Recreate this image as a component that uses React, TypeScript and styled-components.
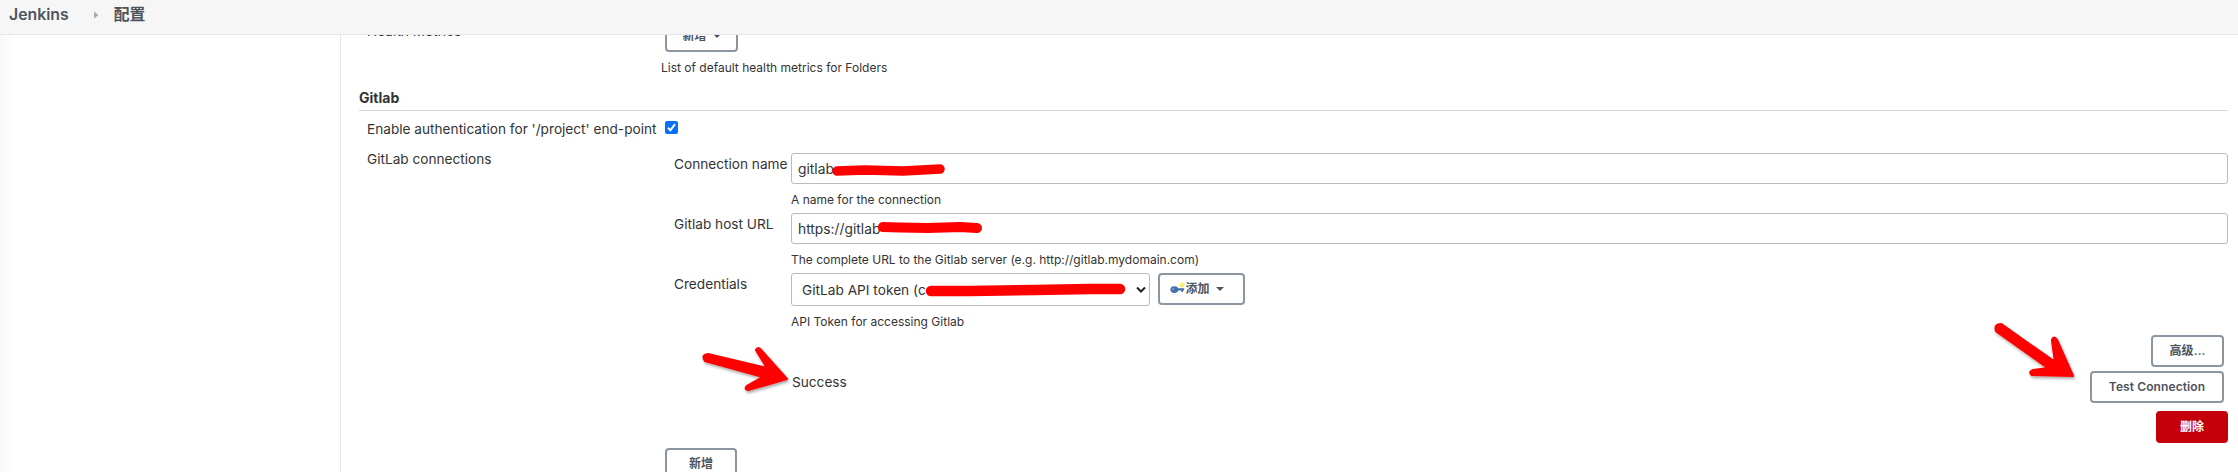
import React from "react";
import styled, { createGlobalStyle } from "styled-components";

const Global = createGlobalStyle`
  * { box-sizing: border-box; }
  html, body { margin: 0; background: #fff; }
  body {
    font-family: Inter, "Noto Sans CJK SC", sans-serif;
    font-size: 14px;
    color: #333;
  }
`;

const Page = styled.div`
  position: relative;
  width: 2238px;
  height: 472px;
  overflow: hidden;
  display: flex;
  flex-direction: column;
`;

const Breadcrumbs = styled.header`
  flex: none;
  height: 35px;
  display: flex;
  align-items: center;
  padding: 0 0 5px 9px;
  background: #f6f6f6;
  border-bottom: 1px solid #e4e6ea;
  font-size: 15.8px;
  font-weight: 600;
  color: #4d545d;
  line-height: 20px;
`;

const CrumbArrow = styled.svg`
  width: 5px;
  height: 8px;
  margin: 0 15px 0 25px;
`;

const Body = styled.div`
  flex: 1;
  min-height: 0;
  display: flex;
`;

const Sidebar = styled.aside`
  width: 341px;
  flex: none;
  border-right: 1px solid #e4e6ea;
  background: linear-gradient(to right, #f8f8f8, #fff 17px);
`;

const Main = styled.main`
  flex: 1;
  min-width: 0;
  overflow: hidden;
  padding: 0 10px 0 18px;
`;

const SectionTitle = styled.h2`
  margin: 0;
  height: 27px;
  padding-top: 5px;
  border-bottom: 1px solid #d4d4d4;
  font-size: 14px;
  line-height: 18px;
  font-weight: 700;
`;

const Row = styled.div<{ $h: number; $top?: number; $end?: boolean }>`
  display: flex;
  height: ${(p) => p.$h}px;
  padding-top: ${(p) => p.$top ?? 0}px;
  justify-content: ${(p) => (p.$end ? "flex-end" : "flex-start")};
`;

const Label = styled.div<{ $w: number; $indent?: number; $top?: number }>`
  flex: none;
  width: ${(p) => p.$w}px;
  padding-left: ${(p) => p.$indent ?? 0}px;
  margin-top: ${(p) => p.$top ?? 1}px;
  font-size: 13.65px;
  line-height: 20px;
  white-space: nowrap;
`;

const Help = styled.div<{ $top?: number }>`
  padding-top: ${(p) => p.$top ?? 8}px;
  font-size: 12px;
  line-height: 16px;
  white-space: nowrap;
`;

const Field = styled.div`
  flex: 1;
  min-width: 0;
`;

const Input = styled.div`
  height: 31px;
  display: flex;
  align-items: center;
  padding: 1px 0 0 6px;
  border: 1px solid #bbb;
  border-radius: 3px;
  font-size: 13.8px;
`;

const Select = styled.div`
  width: 359px;
  height: 33px;
  display: flex;
  align-items: center;
  justify-content: space-between;
  padding: 1px 2px 0 10px;
  border: 1px solid #bbb;
  border-radius: 3px;
  font-size: 13.7px;
`;

const Controls = styled.div`
  display: flex;
  gap: 8px;
`;

const Button = styled.button<{ $w: number; $danger?: boolean; $icon?: boolean }>`
  flex: none;
  width: ${(p) => p.$w}px;
  height: 32px;
  display: flex;
  align-items: center;
  justify-content: center;
  padding: 0 ${(p) => (p.$icon ? 9 : 0)}px 0 0;
  border: 2px solid ${(p) => (p.$danger ? "#c4000a" : "#8c96a1")};
  border-radius: 4px;
  background: ${(p) => (p.$danger ? "#c4000a" : "#fff")};
  color: ${(p) => (p.$danger ? "#fff" : "#4d545d")};
  font: 600 12px/16px Inter, "Noto Sans CJK SC", sans-serif;
  letter-spacing: 0.1px;
`;

const ScrolledButton = styled(Button)`
  margin: -15px 0 0 4px;
`;

const AddButton = styled(Button)`
  margin-left: -9px;
`;

const Caret = styled.span`
  margin-left: 6px;
  border: 4px solid transparent;
  border-top-color: currentColor;
  border-bottom: 0;
`;

const CheckBox = styled.span`
  width: 13px;
  height: 13px;
  margin-top: 10px;
  border-radius: 2px;
  background: #0870f8;
  display: flex;
`;

const Connection = styled.div`
  flex: 1;
  min-width: 0;
  padding: 12px 0 0 9px;
`;

const Actions = styled.div`
  display: flex;
  justify-content: flex-end;
  padding-right: 4px;
`;

const Annotations = styled.svg`
  position: absolute;
  inset: 0;
  pointer-events: none;
`;

const KeyIcon = () => (
  <svg width="15" height="15" viewBox="0 0 15 15">
    <ellipse cx="6" cy="13" rx="5" ry="0.8" fill="#eee" />
    <circle cx="12" cy="3" r="2.4" fill="#f8f060" />
    <path d="M7 6.3h7.2v2.2H13V10h-1.6V8.6H7z" fill="#47719f" />
    <ellipse cx="4.4" cy="7.6" rx="4" ry="3.4" fill="#4571ad" />
    <circle cx="3" cy="7" r="1" fill="#86a8d2" />
  </svg>
);

export default function App() {
  return (
    <Page>
      <Global />
      <Breadcrumbs>
        <span>Jenkins</span>
        <CrumbArrow viewBox="0 0 5 8">
          <path d="M0 0.5 4.5 4 0 7.5z" fill="#aaa" />
        </CrumbArrow>
        <span>配置</span>
      </Breadcrumbs>
      <Body>
        <Sidebar />
        <Main>
          <Row $h={49}>
            <Label $w={302} $indent={8} $top={-14}>Health Metrics</Label>
            <Field>
              <ScrolledButton $w={73}>
                新增
                <Caret />
              </ScrolledButton>
              <Help $top={8}>List of default health metrics for Folders</Help>
            </Field>
          </Row>
          <SectionTitle>Gitlab</SectionTitle>
          <Row $h={30}>
            <Label $w={306} $indent={8} $top={8}>Enable authentication for '/project' end-point</Label>
            <CheckBox>
              <svg width="13" height="13" viewBox="0 0 13 13">
                <path d="M3 6.8 5.4 9.3 10 3.2" fill="none" stroke="#fff" strokeWidth="2" />
              </svg>
            </CheckBox>
          </Row>
          <Row $h={340}>
            <Label $w={306} $indent={8} $top={8}>GitLab connections</Label>
            <Connection>
              <Row $h={60}>
                <Label $w={117}>Connection name</Label>
                <Field>
                  <Input>gitlab</Input>
                  <Help>A name for the connection</Help>
                </Field>
              </Row>
              <Row $h={60}>
                <Label $w={117}>Gitlab host URL</Label>
                <Field>
                  <Input>https://gitlab</Input>
                  <Help>The complete URL to the Gitlab server (e.g. http://gitlab.mydomain.com)</Help>
                </Field>
              </Row>
              <Row $h={62}>
                <Label $w={117}>Credentials</Label>
                <Field>
                  <Controls>
                    <Select>
                      GitLab API token (c
                      <svg width="12" height="8" viewBox="0 0 12 8">
                        <path d="M2 1.5 6 5.5 10 1.5" fill="none" stroke="#222" strokeWidth="2" />
                      </svg>
                    </Select>
                    <Button $w={87} $icon>
                      <KeyIcon />
                      添加
                      <Caret />
                    </Button>
                  </Controls>
                  <Help>API Token for accessing Gitlab</Help>
                </Field>
              </Row>
              <Actions>
                <Button $w={73}>高级...</Button>
              </Actions>
              <Row $h={40} $top={4}>
                <Label $w={117} />
                <Label $w={200} $indent={1} $top={1}>Success</Label>
                <Field>
                  <Actions>
                    <Button $w={134}>Test Connection</Button>
                  </Actions>
                </Field>
              </Row>
              <Row $h={41} $top={4} $end>
                <Button $w={72} $danger>删除</Button>
              </Row>
              <AddButton $w={72}>新增</AddButton>
            </Connection>
          </Row>
        </Main>
      </Body>
      <Annotations width="2238" height="472" viewBox="0 0 2238 472">
        <defs>
          <filter id="shadow" x="-20%" y="-20%" width="140%" height="150%">
            <feDropShadow dx="1" dy="2" stdDeviation="1.5" floodOpacity="0.35" />
          </filter>
        </defs>
        <g fill="none" stroke="#fe0000" strokeLinecap="round" strokeLinejoin="round">
          <path d="M837 171 865 170 903 171 940 169" strokeWidth="9.5" />
          <path d="M883 227 900 227.5 928 228 960 227 977 228" strokeWidth="10" />
          <path d="M931 291 970 291 1035 290 1090 289 1120 289" strokeWidth="10.5" />
        </g>
        <g fill="#fe0000" stroke="#fe0000" strokeLinejoin="round" filter="url(#shadow)">
          <path d="M708 354 767 368 756 350Q758 346 761 350L787 379 748 390Q744 389 747 386L763 377 705 361Q701 355 708 354Z" strokeWidth="2.2" />
          <path d="M2001 324 2055 362 2052 340Q2054 335 2057 340L2073 376 2032 375Q2028 372 2033 370L2048 368 1996 331Q1994 324 2001 324Z" strokeWidth="2.2" />
        </g>
      </Annotations>
    </Page>
  );
}
